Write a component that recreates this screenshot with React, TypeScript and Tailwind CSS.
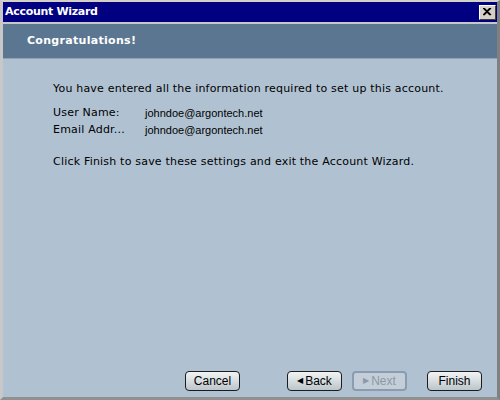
import React from "react";

const ui = { fontFamily: '"DejaVu Sans", Verdana, sans-serif' };
const tahoma = { fontFamily: '"Liberation Sans", Tahoma, Arial, sans-serif' };

function WizButton({ label, arrow, disabled }: { label: string; arrow?: "left" | "right"; disabled?: boolean }) {
  return (
    <div
      className={`flex h-[20px] w-[55px] items-center justify-center rounded-[4px] ${
        disabled ? "border-2 border-[#8a9db0] bg-[#c4ced8] text-[#8d99a6]" : "border border-[#1c1c1c] bg-gradient-to-b from-[#f2f4f4] to-[#bcc6cc] text-black"
      }`}
      style={tahoma}
    >
      {arrow === "left" && <span className="mr-[2px] text-[8px] leading-none">◀</span>}
      {arrow === "right" && <span className="mr-[2px] text-[8px] leading-none">▶</span>}
      <span className="text-[12px] leading-none">{label}</span>
    </div>
  );
}

export default function App() {
  return (
    <div className="flex h-[400px] w-[500px] flex-col border-t-2 border-l-[3px] border-r-[3px] border-b-[3px] border-t-[#d4d0c8] border-l-[#c8c8c8] border-r-[#808080] border-b-[#909090] bg-[#c8c8c8]">
      {/* title bar */}
      <div className="flex h-[20px] items-center justify-between bg-[#000080] pl-[2px] pr-[1px]">
        <span className="text-[11px] font-bold tracking-[-0.3px] text-white" style={ui}>
          Account Wizard
        </span>
        <div className="flex h-[15px] w-[17px] items-center justify-center border border-t-white border-l-white border-r-[#404040] border-b-[#404040] bg-[#d4d0c8]">
          <svg width="9" height="8" viewBox="0 0 9 8">
            <path d="M1 0 L8 7 M0 0 L7 7 M8 0 L1 7 M7 0 L0 7" stroke="black" strokeWidth="1.2" />
          </svg>
        </div>
      </div>
      <div className="h-[2px] bg-[#c8c8c8]" />
      {/* header band */}
      <div className="flex h-[35px] items-center border-b border-b-[#8ea2b4] bg-[#5a7691] pl-[24px]">
        <span className="text-[11px] font-bold tracking-[0.3px] text-white" style={ui}>
          Congratulations!
        </span>
      </div>
      {/* body */}
      <div className="flex flex-1 flex-col bg-[#b0c2d2] px-[50px] pt-[23px] text-[11px] text-black">
        <p style={ui} className="leading-[14px] tracking-[0.2px]">
          You have entered all the information required to set up this account.
        </p>
        <div className="mt-[10px] flex flex-col gap-[3px]">
          <div className="flex items-center leading-[14px]">
            <span style={ui} className="w-[92px] tracking-[0.2px]">User Name:</span>
            <span style={tahoma}>johndoe@argontech.net</span>
          </div>
          <div className="flex items-center leading-[14px]">
            <span style={ui} className="w-[92px] tracking-[0.2px]">Email Addr...</span>
            <span style={tahoma}>johndoe@argontech.net</span>
          </div>
        </div>
        <p style={ui} className="mt-[18px] leading-[14px] tracking-[0.2px]">
          Click Finish to save these settings and exit the Account Wizard.
        </p>
        <div className="-mr-[32px] mt-auto mb-[6px] flex items-center">
          <div className="ml-[132px]">
            <WizButton label="Cancel" />
          </div>
          <div className="ml-[47px]">
            <WizButton label="Back" arrow="left" />
          </div>
          <div className="ml-[10px]">
            <WizButton label="Next" arrow="right" disabled />
          </div>
          <div className="ml-[20px]">
            <WizButton label="Finish" />
          </div>
        </div>
      </div>
    </div>
  );
}
